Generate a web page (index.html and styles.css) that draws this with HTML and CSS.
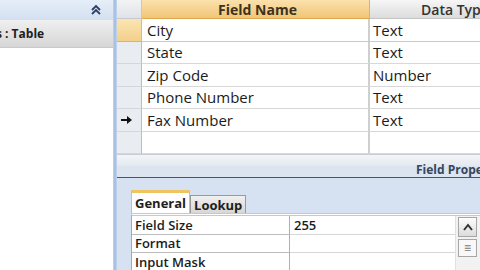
FILE: index.html
```html
<!DOCTYPE html>
<html>
<head>
<meta charset="utf-8">
<link rel="stylesheet" href="styles.css">
</head>
<body>
<div class="app">
  <aside class="nav">
    <div class="nav-top">
      <svg class="chev" width="12" height="12" viewBox="0 0 12 12"><path d="M2 6 L6 2 L10 6 M2 10 L6 6 L10 10" fill="none" stroke="#2b3f63" stroke-width="1.8"/></svg>
    </div>
    <div class="nav-group">s : Table</div>
    <div class="nav-body"></div>
  </aside>
  <div class="split"></div>
  <main class="main">
    <div class="grid">
      <div class="hsel"></div>
      <div class="hname">Field Name</div>
      <div class="htype">Data Typ</div>

      <div class="sel cur"></div><div class="cell name cur-row">City</div><div class="cell type cur-row">Text</div>
      <div class="sel"></div><div class="cell name">State</div><div class="cell type">Text</div>
      <div class="sel"></div><div class="cell name">Zip Code</div><div class="cell type">Number</div>
      <div class="sel"></div><div class="cell name">Phone Number</div><div class="cell type">Text</div>
      <div class="sel"><svg width="11" height="8" viewBox="0 0 11 8"><path d="M0 3 H6 V0 L11 4 L6 8 V5 H0 Z" fill="#111"/></svg></div><div class="cell name">Fax Number</div><div class="cell type">Text</div>
      <div class="sel"></div><div class="cell name"></div><div class="cell type"></div>
    </div>
    <div class="gap"></div>
    <div class="fp-bar"><span class="fp-title">Field Properties</span></div>
    <div class="props">
      <div class="tabs">
        <div class="tab active">General</div>
        <div class="tab">Lookup</div>
      </div>
      <div class="sheet">
        <div class="ptable">
          <div class="plabel">Field Size</div><div class="pval">255</div>
          <div class="plabel">Format</div><div class="pval"></div>
          <div class="plabel">Input Mask</div><div class="pval"></div>
        </div>
        <div class="scroll">
          <div class="sbtn"><svg width="10" height="8" viewBox="0 0 10 8"><path d="M1 7 L5 2 L9 7" fill="none" stroke="#333" stroke-width="2"/></svg></div>
          <div class="sthumb">≡</div>
        </div>
      </div>
    </div>
  </main>
</div>
</body>
</html>
```
FILE: styles.css
```css
* { box-sizing: border-box; }
html, body { margin: 0; padding: 0; }
body {
  width: 480px; height: 270px; overflow: hidden;
  font-family: "Open Sans", "Noto Sans", sans-serif;
  color: #1b1b1b;
  background: #fff;
}
.app { display: flex; height: 270px; }

.nav { width: 113px; display: flex; flex-direction: column; background: #fff; }
.nav-top {
  height: 20px; flex-shrink: 0;
  background: linear-gradient(#e6eef8, #d3e0f1);
  display: flex; justify-content: flex-end; align-items: center;
  padding-right: 11px;
}
.nav-group {
  height: 28px; flex-shrink: 0;
  background: linear-gradient(#efefef, #d6d6d6);
  border-bottom: 1px solid #c9c9c9;
  font-weight: 700; font-size: 12px;
  display: flex; align-items: center;
  margin-left: -4px;
  color: #202020;
}
.nav-body { flex: 1; background: #fff; }

.split {
  width: 4px;
  background: linear-gradient(90deg, #c4d5ec, #9fbbe0 50%, #c8d8ee);
}

.main { flex: 1; display: flex; flex-direction: column; background: #d6e2f1; min-width: 0; overflow: hidden; }

.grid {
  display: grid; flex-shrink: 0;
  grid-template-columns: 25px 228px 1fr;
  grid-template-rows: 19px repeat(6, 22.5px);
  background: #fff;
}
.hsel { background: linear-gradient(#f2f3f5, #dfe2e7); border-right: 1px solid #c5c9cf; border-bottom: 1px solid #c5c9cf; }
.hname {
  background: linear-gradient(#fbe1ac, #f2c577);
  border-bottom: 1px solid #d9a94e;
  border-right: 1px solid #d7b27a;
  font-weight: 700; font-size: 14px; color: #3b3320;
  display: flex; align-items: center; justify-content: center;
  padding-left: 4px;
}
.htype {
  background: linear-gradient(#f6f6f6, #dcdcdc);
  border-bottom: 1px solid #c4c4c4;
  font-weight: 600; font-size: 14px; color: #333;
  display: flex; align-items: center;
  padding-left: 51px;
  white-space: nowrap; overflow: hidden;
}
.sel {
  background: #e9ecf1;
  border-right: 1px solid #b9bec6;
  border-bottom: 1px solid #d3d7dd;
  display: flex; align-items: center; justify-content: flex-start;
  padding-left: 4px;
}
.sel.cur { background: linear-gradient(#fbe5b2, #f3d08c); border-bottom-color: #d9b46b; }
.cell {
  border-bottom: 1px solid #d8d8d8;
  font-size: 15px; font-weight: 500;
  display: flex; align-items: center;
  padding-left: 5px;
  white-space: nowrap; overflow: hidden;
}
.cell.name { border-right: 2px solid #cfcfcf; }
.cell.type { padding-left: 3px; }
.cell.cur-row { border-bottom-color: #e0c890; }

.gap { height: 12px; flex-shrink: 0; background: linear-gradient(#f3f5f8, #e3e9f1); border-top: 1px solid #c9ced6; }
.fp-bar {
  height: 12px; flex-shrink: 0;
  background: #dbe4ef;
  border-bottom: 1px solid #4a5566;
  position: relative;
}
.fp-title {
  position: absolute; left: 299px; top: -2px;
  font-size: 12px; line-height: 12px; font-weight: 700; color: #35465e;
  white-space: nowrap;
}

.props { flex: 1; min-height: 0; padding: 12px 0 0 14px; display: flex; flex-direction: column; }
.tabs { display: flex; align-items: flex-end; height: 23px; flex-shrink: 0; }
.tab {
  font-size: 13px; font-weight: 700; color: #1e1e1e;
  height: 18px; padding: 0 3px;
  background: linear-gradient(#f0f0f0, #d7d7d7);
  border: 1px solid #9a9a9a; border-bottom: none;
  display: flex; align-items: center;
}
.tab.active {
  height: 23px; background: #fff;
  border: 1px solid #c9c1a4; border-top: 3px solid #f0c561; border-bottom: none;
  padding: 0 3px;
}
.sheet {
  flex: 1; min-height: 0; overflow: hidden; display: flex; background: #fff;
  border-left: 1px solid #a9a9a9;
  border-top: 3px double #c8c8c8;
}
.ptable {
  flex: 1;
  display: grid;
  grid-template-columns: 158px 1fr;
  grid-auto-rows: 18.5px;
}
.plabel {
  font-size: 13px; font-weight: 600; color: #1c1c1c;
  padding-left: 3px;
  border-bottom: 1px solid #bdbdbd;
  border-right: 1px solid #b0b0b0;
  display: flex; align-items: center;
}
.pval {
  font-size: 13px; font-weight: 600;
  padding-left: 4px;
  border-bottom: 1px solid #d6d6d6;
  display: flex; align-items: center;
}
.scroll { width: 25px; background: #f2f2f2; padding: 1px 3px 0 2px; border-left: 1px solid #e0e0e0; }
.sbtn {
  height: 20px; border: 1px solid #a6a6a6; background: linear-gradient(#fdfdfd, #dcdcdc);
  display: flex; align-items: center; justify-content: center;
}
.sthumb {
  margin-top: 2px; height: 18px; border: 1px solid #a6a6a6; background: #f8f8f8;
  font-size: 12px; color: #777; text-align: center; line-height: 16px;
}
```
